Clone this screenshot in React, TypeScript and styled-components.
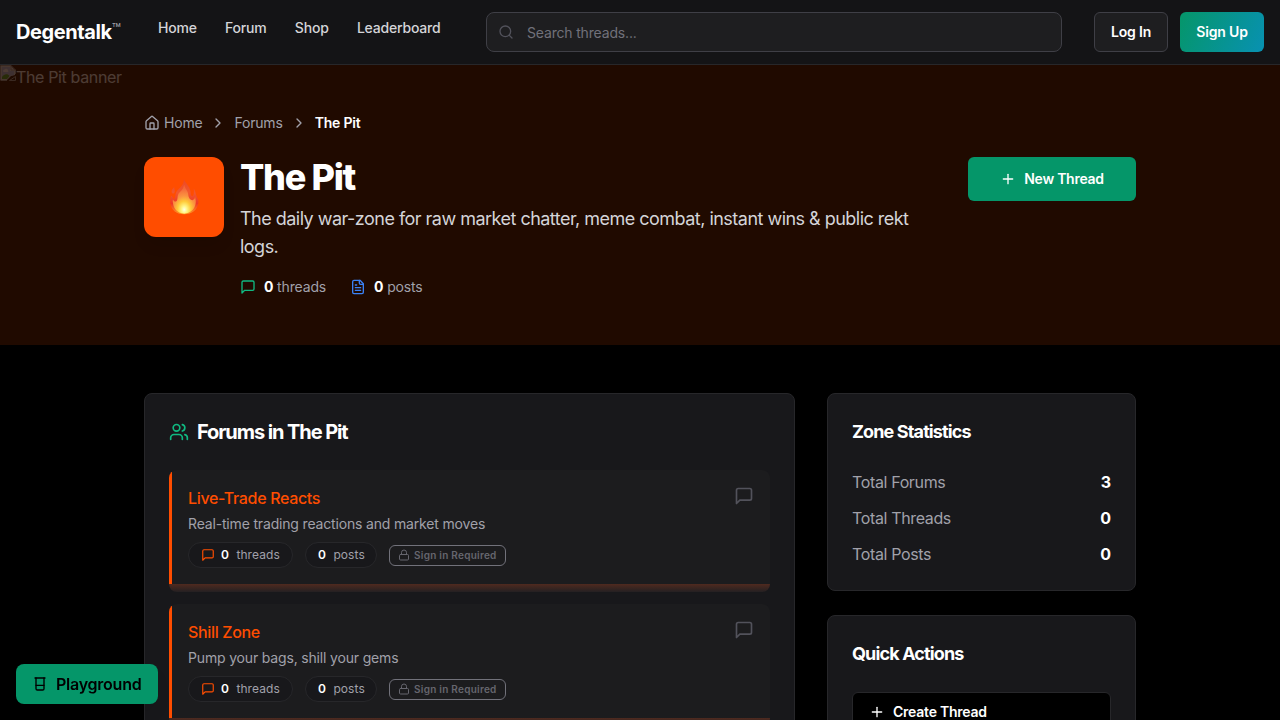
import React from "react";
import styled, { createGlobalStyle } from "styled-components";

const GlobalStyle = createGlobalStyle`
  *, *::before, *::after { box-sizing: border-box; }
  html, body { margin: 0; background: #000; height: 100%; overflow: hidden; }
  body {
    font-family: Inter, "Liberation Sans", sans-serif;
    font-size: 16px;
    line-height: 24px;
    letter-spacing: -0.36px;
    color: #fff;
    -webkit-font-smoothing: antialiased;
  }
  h1, h2, h3, p { margin: 0; }
  button { font-family: inherit; }
`;

const Svg = styled.svg<{ $size: number }>`
  display: block;
  flex: none;
  width: ${(p) => p.$size}px;
  height: ${(p) => p.$size}px;
  fill: none;
  stroke: currentColor;
  stroke-width: 2;
  stroke-linecap: round;
  stroke-linejoin: round;
`;

const paths = {
  search: ["m21 21-4.3-4.3", "M11 3a8 8 0 1 0 0 16a8 8 0 1 0 0-16"],
  home: [
    "M15 21v-8a1 1 0 0 0-1-1h-4a1 1 0 0 0-1 1v8",
    "M3 10a2 2 0 0 1 .709-1.528l7-5.999a2 2 0 0 1 2.582 0l7 5.999A2 2 0 0 1 21 10v9a2 2 0 0 1-2 2H5a2 2 0 0 1-2-2z",
  ],
  chevron: ["m9 18 6-6-6-6"],
  plus: ["M5 12h14", "M12 5v14"],
  message: ["M21 15a2 2 0 0 1-2 2H7l-4 4V5a2 2 0 0 1 2-2h14a2 2 0 0 1 2 2z"],
  file: [
    "M15 2H6a2 2 0 0 0-2 2v16a2 2 0 0 0 2 2h12a2 2 0 0 0 2-2V7Z",
    "M14 2v4a2 2 0 0 0 2 2h4",
    "M10 9H8",
    "M16 13H8",
    "M16 17H8",
  ],
  users: [
    "M16 21v-2a4 4 0 0 0-4-4H6a4 4 0 0 0-4 4v2",
    "M9 3a4 4 0 1 0 0 8a4 4 0 1 0 0-8",
    "M22 21v-2a4 4 0 0 0-3-3.87",
    "M16 3.13a4 4 0 0 1 0 7.75",
  ],
  lock: [
    "M5 11h14a2 2 0 0 1 2 2v7a2 2 0 0 1-2 2H5a2 2 0 0 1-2-2v-7a2 2 0 0 1 2-2z",
    "M7 11V7a5 5 0 0 1 10 0v4",
  ],
  beaker: ["M4.5 3h15", "M6 3v16a2 2 0 0 0 2 2h8a2 2 0 0 0 2-2V3", "M6 14h12"],
};

function Icon({ name, size = 16 }: { name: keyof typeof paths; size?: number }) {
  return (
    <Svg viewBox="0 0 24 24" $size={size} aria-hidden="true">
      {paths[name].map((d) => (
        <path key={d} d={d} />
      ))}
    </Svg>
  );
}

const Header = styled.header`
  display: flex;
  align-items: center;
  height: 65px;
  padding: 0 16px;
  background: #141416;
  border-bottom: 1px solid #27272a;
`;

const Logo = styled.div`
  display: flex;
  width: 142px;
  font-size: 20px;
  font-weight: 750;
  line-height: 28px;
  letter-spacing: -0.42px;
`;

const Trademark = styled.span`
  margin-top: -1px;
  font-size: 15px;
  font-weight: 400;
  line-height: 24px;
  letter-spacing: 0;
  color: #a1a1aa;
`;

const Nav = styled.nav`
  display: flex;
  gap: 28.3px;
  width: 328px;
  padding-bottom: 8px;
  font-size: 14px;
  font-weight: 550;
  line-height: 20px;
  letter-spacing: -0.2px;
  color: #d4d4d8;
`;

const SearchField = styled.div`
  display: flex;
  align-items: center;
  gap: 13px;
  width: 576px;
  height: 40px;
  padding: 0 11px;
  background: #1e1e20;
  border: 1px solid #3f3f46;
  border-radius: 8px;
  color: #52525b;
`;

const Placeholder = styled.span`
  padding-top: 1px;
  font-size: 14px;
  line-height: 20px;
  letter-spacing: -0.17px;
  color: #71717a;
`;

const AuthActions = styled.div`
  display: flex;
  gap: 12px;
  margin-left: auto;
`;

const AuthButton = styled.button<{ $primary?: boolean }>`
  height: 40px;
  width: ${(p) => (p.$primary ? 84 : 74)}px;
  padding: 0;
  border: ${(p) => (p.$primary ? "0" : "1px solid #3f3f46")};
  border-radius: 6px;
  background: ${(p) => (p.$primary ? "linear-gradient(115deg, #059669, #0891b2)" : "#1e1e20")};
  color: #fff;
  font-size: 14px;
  font-weight: 600;
  line-height: 20px;
  letter-spacing: -0.17px;
`;

const Banner = styled.section`
  position: relative;
  height: 280px;
  padding: 48px 144px;
  background: #200a00;
`;

const BrokenBanner = styled.div`
  position: absolute;
  top: 0;
  left: 0;
  display: flex;
  align-items: flex-start;
  opacity: 0.2;
`;

const BrokenGlyph = styled.svg`
  display: block;
  width: 16px;
  height: 16px;
`;

const Breadcrumb = styled.nav`
  display: flex;
  align-items: center;
  height: 20px;
  margin-bottom: 24px;
  font-size: 14px;
  line-height: 20px;
  letter-spacing: -0.19px;
  color: #a1a1aa;
`;

const Crumb = styled.span<{ $current?: boolean }>`
  display: flex;
  align-items: center;
  gap: 4px;
  font-weight: ${(p) => (p.$current ? 600 : 400)};
  letter-spacing: ${(p) => (p.$current ? "-0.2px" : "inherit")};
  color: ${(p) => (p.$current ? "#fff" : "inherit")};
`;

const CrumbDivider = styled.span`
  margin: 0 8px;
`;

const Hero = styled.div`
  display: flex;
  align-items: flex-start;
  gap: 16px;
`;

const ZoneTile = styled.div`
  display: grid;
  place-items: center;
  width: 80px;
  height: 80px;
  padding-left: 1px;
  padding-bottom: 2px;
  flex: none;
  border-radius: 12px;
  background: #ff4d00;
  box-shadow: 0 10px 15px -3px rgba(0, 0, 0, 0.1);
`;

const HeroText = styled.div`
  width: 704px;
`;

const Title = styled.h1`
  font-size: 36px;
  font-weight: 800;
  line-height: 40px;
  letter-spacing: -1.3px;
`;

const Description = styled.p`
  margin-top: 8px;
  font-size: 18px;
  line-height: 28px;
  letter-spacing: -0.52px;
  color: #d4d4d8;
`;

const HeroStats = styled.div`
  display: flex;
  gap: 24px;
  margin-top: 16px;
  font-size: 14px;
  line-height: 20px;
  letter-spacing: -0.15px;
  color: #a1a1aa;
`;

const HeroStat = styled.div<{ $color: string }>`
  display: flex;
  align-items: center;
  gap: 8px;
  svg { color: ${(p) => p.$color}; }
  b { font-weight: 700; color: #fff; }
`;

const NewThread = styled.button`
  display: flex;
  align-items: center;
  justify-content: center;
  gap: 8px;
  width: 168px;
  height: 44px;
  margin-left: auto;
  padding: 0;
  border: 0;
  border-radius: 6px;
  background: #059669;
  color: #fff;
  font-size: 14px;
  font-weight: 600;
  line-height: 20px;
  letter-spacing: -0.27px;
`;

const Main = styled.main`
  display: grid;
  grid-template-columns: 651px 309px;
  gap: 32px;
  align-items: start;
  padding: 48px 144px;
`;

const Sidebar = styled.aside`
  display: grid;
  gap: 24px;
`;

const Card = styled.section`
  padding: 24px;
  background: #18181b;
  border: 1px solid #27272a;
  border-radius: 8px;
`;

const CardTitle = styled.h2<{ $large?: boolean }>`
  display: flex;
  align-items: center;
  gap: 8px;
  margin-bottom: 24px;
  font-size: ${(p) => (p.$large ? 20 : 18)}px;
  font-weight: 650;
  line-height: 28px;
  letter-spacing: ${(p) => (p.$large ? -1.08 : -0.87)}px;
  svg { color: #10b981; }
`;

const ForumList = styled.div`
  display: grid;
  gap: 12px;
`;

const Forum = styled.article`
  overflow: hidden;
  border-radius: 8px;
`;

const ForumBody = styled.div`
  display: flex;
  justify-content: space-between;
  height: 114px;
  padding: 16px;
  border-left: 3px solid #ff4d00;
  background: #1c1c1e;
`;

const ForumGlow = styled.div`
  height: 8px;
  background: linear-gradient(to bottom, #4f2a1f, #242022);
`;

const ForumName = styled.h3`
  font-size: 16px;
  font-weight: 550;
  line-height: 24px;
  letter-spacing: -0.34px;
  color: #ff4d00;
`;

const ForumText = styled.p`
  margin: 4px 0 8px;
  font-size: 14px;
  line-height: 20px;
  letter-spacing: -0.17px;
  color: #a1a1aa;
`;

const ForumIcon = styled.div`
  color: #52525b;
`;

const Pills = styled.div`
  display: flex;
  align-items: center;
  gap: 12px;
`;

const Pill = styled.span<{ $width: number }>`
  display: flex;
  align-items: center;
  width: ${(p) => p.$width}px;
  height: 26px;
  padding-left: 12px;
  border: 1px solid #27272a;
  border-radius: 13px;
  background: #18181b;
  font-size: 12px;
  line-height: 16px;
  letter-spacing: 0.08px;
  color: #a1a1aa;
  svg { margin-right: 6px; color: #ff4d00; }
  b { margin-right: 7.4px; font-weight: 600; color: #fff; }
`;

const LockBadge = styled.span`
  display: flex;
  align-items: center;
  gap: 4px;
  height: 21px;
  padding: 0 8px;
  border: 1px solid #71717a;
  border-radius: 6px;
  font-size: 10px;
  font-weight: 600;
  line-height: 15px;
  letter-spacing: 0.26px;
  color: #66666e;
`;

const StatRows = styled.div`
  display: grid;
  gap: 12px;
`;

const StatRow = styled.div`
  display: flex;
  justify-content: space-between;
  color: #a1a1aa;
  b { font-weight: 650; letter-spacing: 0; color: #fff; }
`;

const ActionButton = styled.button`
  display: flex;
  align-items: center;
  gap: 8px;
  width: 100%;
  height: 40px;
  padding: 0 16px;
  border: 1px solid #27272a;
  border-radius: 6px;
  background: #000;
  color: #fff;
  font-size: 14px;
  font-weight: 600;
  line-height: 20px;
  letter-spacing: -0.24px;
`;

const Playground = styled.button`
  position: fixed;
  left: 16px;
  bottom: 16px;
  display: flex;
  align-items: center;
  gap: 8px;
  width: 142px;
  height: 40px;
  padding: 0 0 0 16px;
  border: 0;
  border-radius: 8px;
  background: #059669;
  color: #000;
  font-size: 16px;
  font-weight: 600;
  line-height: 24px;
  letter-spacing: -0.24px;
  box-shadow: 0 10px 15px -3px rgba(0, 0, 0, 0.1);
`;

function Flame() {
  return (
    <svg width="29" height="37" viewBox="78 62 88 112" aria-hidden="true">
      <defs>
        <linearGradient id="outer" x1="0" y1="0" x2="0" y2="1">
          <stop offset="0" stopColor="#ea4826" />
          <stop offset="0.4" stopColor="#f2582c" />
          <stop offset="0.7" stopColor="#ee3824" />
          <stop offset="1" stopColor="#ff9a24" />
        </linearGradient>
        <radialGradient id="inner" cx="0.5" cy="0.86" r="0.72">
          <stop offset="0" stopColor="#ffffe6" />
          <stop offset="0.16" stopColor="#fff68a" />
          <stop offset="0.4" stopColor="#ffca38" />
          <stop offset="0.65" stopColor="#fb9440" />
          <stop offset="1" stopColor="#f4683a" />
        </radialGradient>
      </defs>
      <path
        fill="url(#outer)"
        d="M120 64C124 78 138 86 140 102C141 111 141 117 146 117C151 116 151 104 150 94C157 104 155 112 160 120C164 126 165 131 164 138C161 160 145 172 121 172C97 172 81 159 79 138C78 128 80 122 81 115C85 117 87 122 90 126C96 122 93 110 98 103C105 92 122 84 120 64ZM91 88C90 96 95 101 91 108C87 111 82 107 83 101C84 95 89 94 91 88Z"
      />
      <path
        fill="url(#inner)"
        d="M121 82C123 94 132 99 133 110C134 121 138 129 146 129C152 128 154 122 154 118C155 124 157 130 156 138C154 157 140 170 121 170C102 170 89 157 87 138C86 132 86 129 87 127C89 131 92 134 96 133C103 130 99 118 104 109C110 101 119 96 121 82Z"
      />
    </svg>
  );
}

function BrokenImage() {
  return (
    <BrokenGlyph viewBox="0 0 16 16" aria-hidden="true">
      <path fill="#e4e4e4" d="M1 1h10l4 4v5l-4 1-4 4H1z" />
      <path fill="#b8c9f2" d="M2 2h8v4h4v4l-4 1-3 3H2z" />
      <path fill="#fff" d="M3.500 7a1.500 1.500 0 0 1 1-2.500 2 2 0 0 1 3.500 1A1 1 0 0 1 8 7z" />
      <path fill="#4caf2a" d="M2 14v-2c2-3.500 6-3.500 7.500-1L7 14z" />
      <path fill="none" stroke="#a3a3a3" d="M.5 15V.5H11L15.500 5v4M11 .5V5h4.500M.5 15.500H7M9.500 15.500h6V11.500z" />
    </BrokenGlyph>
  );
}

const forums = [
  { name: "Live-Trade Reacts", text: "Real-time trading reactions and market moves" },
  { name: "Shill Zone", text: "Pump your bags, shill your gems" },
];

const stats = [
  { label: "Total Forums", value: 3 },
  { label: "Total Threads", value: 0 },
  { label: "Total Posts", value: 0 },
];

export default function App() {
  return (
    <>
      <GlobalStyle />
      <Header>
        <Logo>
          Degentalk<Trademark>™</Trademark>
        </Logo>
        <Nav>
          <span>Home</span>
          <span>Forum</span>
          <span>Shop</span>
          <span>Leaderboard</span>
        </Nav>
        <SearchField>
          <Icon name="search" />
          <Placeholder>Search threads...</Placeholder>
        </SearchField>
        <AuthActions>
          <AuthButton>Log In</AuthButton>
          <AuthButton $primary>Sign Up</AuthButton>
        </AuthActions>
      </Header>

      <Banner>
        <BrokenBanner>
          <BrokenImage />
          The Pit banner
        </BrokenBanner>
        <Breadcrumb>
          <Crumb>
            <Icon name="home" />
            Home
          </Crumb>
          <CrumbDivider>
            <Icon name="chevron" />
          </CrumbDivider>
          <Crumb>Forums</Crumb>
          <CrumbDivider>
            <Icon name="chevron" />
          </CrumbDivider>
          <Crumb $current>The Pit</Crumb>
        </Breadcrumb>
        <Hero>
          <ZoneTile>
            <Flame />
          </ZoneTile>
          <HeroText>
            <Title>The Pit</Title>
            <Description>
              The daily war-zone for raw market chatter, meme combat, instant wins &amp; public rekt logs.
            </Description>
            <HeroStats>
              <HeroStat $color="#10b981">
                <Icon name="message" />
                <span>
                  <b>0</b> threads
                </span>
              </HeroStat>
              <HeroStat $color="#3b82f6">
                <Icon name="file" />
                <span>
                  <b>0</b> posts
                </span>
              </HeroStat>
            </HeroStats>
          </HeroText>
          <NewThread>
            <Icon name="plus" />
            New Thread
          </NewThread>
        </Hero>
      </Banner>

      <Main>
        <Card>
          <CardTitle $large>
            <Icon name="users" size={20} />
            Forums in The Pit
          </CardTitle>
          <ForumList>
            {forums.map((forum) => (
              <Forum key={forum.name}>
                <ForumBody>
                  <div>
                    <ForumName>{forum.name}</ForumName>
                    <ForumText>{forum.text}</ForumText>
                    <Pills>
                      <Pill $width={105}>
                        <Icon name="message" size={14} />
                        <b>0</b>
                        threads
                      </Pill>
                      <Pill $width={72}>
                        <b>0</b>
                        posts
                      </Pill>
                      <LockBadge>
                        <Icon name="lock" size={12} />
                        Sign in Required
                      </LockBadge>
                    </Pills>
                  </div>
                  <ForumIcon>
                    <Icon name="message" size={20} />
                  </ForumIcon>
                </ForumBody>
                <ForumGlow />
              </Forum>
            ))}
          </ForumList>
        </Card>
        <Sidebar>
          <Card>
            <CardTitle>Zone Statistics</CardTitle>
            <StatRows>
              {stats.map((stat) => (
                <StatRow key={stat.label}>
                  <span>{stat.label}</span>
                  <b>{stat.value}</b>
                </StatRow>
              ))}
            </StatRows>
          </Card>
          <Card>
            <CardTitle>Quick Actions</CardTitle>
            <ActionButton>
              <Icon name="plus" />
              Create Thread
            </ActionButton>
          </Card>
        </Sidebar>
      </Main>

      <Playground>
        <Icon name="beaker" />
        Playground
      </Playground>
    </>
  );
}
